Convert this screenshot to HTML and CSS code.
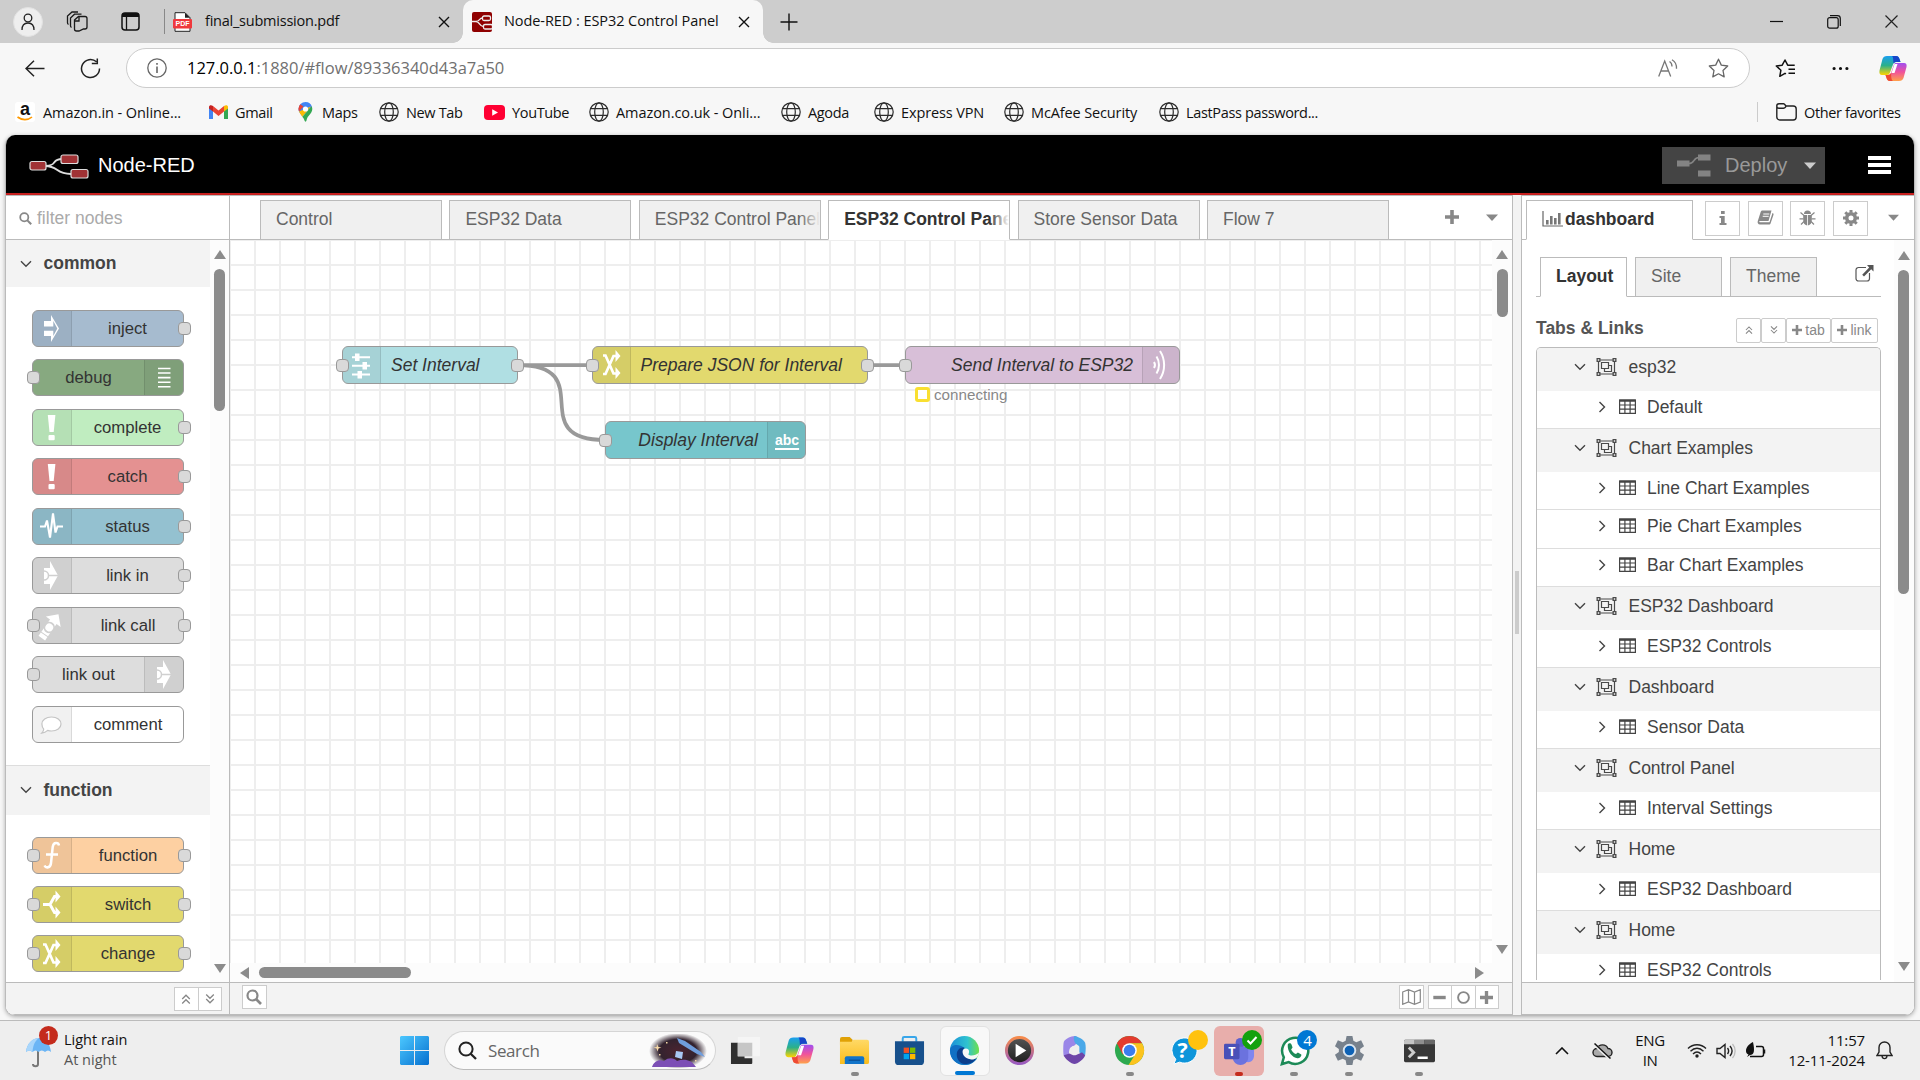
FILE: index.html
```html
<!DOCTYPE html>
<html lang="en">
<head>
<meta charset="utf-8">
<title>Node-RED : ESP32 Control Panel</title>
<link rel="stylesheet" href="styles.css">
</head>
<body>
<svg width="0" height="0" class="defs" aria-hidden="true">
  <defs>
    <linearGradient id="cpA" x1="0" y1="0" x2="0" y2="1"><stop offset="0" stop-color="#1b9ff0"/><stop offset=".5" stop-color="#2bb08a"/><stop offset="1" stop-color="#ffd500"/></linearGradient>
    <linearGradient id="cpB" x1="0" y1="0" x2="0" y2="1"><stop offset="0" stop-color="#a04ef0"/><stop offset=".5" stop-color="#f0529c"/><stop offset="1" stop-color="#ffa14a"/></linearGradient>
    <linearGradient id="edgeG" x1="0" y1="0" x2="1" y2="0"><stop offset="0" stop-color="#1a8fd8"/><stop offset=".6" stop-color="#2fc3d0"/><stop offset="1" stop-color="#6fe04a"/></linearGradient>
    <linearGradient id="folderG" x1="0" y1="0" x2="0" y2="1"><stop offset="0" stop-color="#ffd966"/><stop offset="1" stop-color="#fbbc1a"/></linearGradient>
    <linearGradient id="winG" x1="0" y1="0" x2="1" y2="1"><stop offset="0" stop-color="#4cc8ff"/><stop offset="1" stop-color="#0670cf"/></linearGradient>
    <linearGradient id="ringG" x1="0" y1="0" x2="0" y2="1"><stop offset="0" stop-color="#f58a4b"/><stop offset="1" stop-color="#9a5bc0"/></linearGradient>
    <linearGradient id="darkG" x1="0" y1="0" x2="0" y2="1"><stop offset="0" stop-color="#555"/><stop offset="1" stop-color="#1e1e1e"/></linearGradient>
    <radialGradient id="spaceG"><stop offset="0" stop-color="#4a2330"/><stop offset=".65" stop-color="#33232f"/><stop offset="1" stop-color="#fafafa"/></radialGradient>
  </defs>
  <symbol id="globe" viewBox="0 0 20 20"><g fill="none" stroke="#2b2b2b" stroke-width="1.2"><circle cx="10" cy="10" r="9.2"/><ellipse cx="10" cy="10" rx="4.3" ry="9.2"/><path d="M1.6 6.6h16.8M1.6 13.4h16.8"/></g></symbol>
  <symbol id="close" viewBox="0 0 12 12"><path d="M1 1l10 10M11 1L1 11" stroke="#111" stroke-width="1.4" fill="none"/></symbol>
  <symbol id="copilot" viewBox="0 0 28 27"><path d="M8 1h9c2.400 0 3 1.500 3.500 3l1 3h-4c-2 0-3 1-3.500 2.500L11 17.500c-.6 1.700-1.500 2.500-3 2.500H3C.8 20 0 18 .5 15.500L3.500 4C4.200 2 5.600 1 8 1z" fill="url(#cpA)"/><path d="M13 1h4c2.400 0 3 1.500 3.500 3l1 3h-4c-1.400 0-2.500.6-3 1.500C14 5 14.500 2 13 1z" fill="#1746c8"/><path d="M20 26h-9c-2.400 0-3-1.500-3.500-3l-1-3H9c1.500 0 2.600-1 3.200-2.500L15 9.500C15.600 7.800 16.500 8 18 8h7c2.200 0 3 1.500 2.500 4l-3 11c-.7 2-2.100 3-4.500 3z" fill="url(#cpB)"/><path d="M14 26h-3c-2.400 0-3-1.500-3.500-3l-1-3H9c1.500 0 2.600-1 3-2 .5 2-.5 6 2 8z" fill="#ee4a34"/><path d="M15.500 9h3l-3 9h-3z" fill="#fff"/></symbol>
  <symbol id="up2" viewBox="0 0 10 12"><path d="M1.200 6L5 2.200 8.800 6M1.200 10.500L5 6.700l3.800 3.800" fill="none" stroke="currentColor" stroke-width="1.300"/></symbol>
  <symbol id="down2" viewBox="0 0 10 12"><path d="M1.200 1.500L5 5.300l3.800-3.800M1.200 6L5 9.800 8.800 6" fill="none" stroke="currentColor" stroke-width="1.300"/></symbol>
  <symbol id="plus" viewBox="0 0 14 14"><path d="M5.200 0h3.600v5.200H14v3.600H8.800V14H5.200V8.800H0V5.200h5.200z" fill="currentColor"/></symbol>
  <symbol id="caret" viewBox="0 0 12 7"><path d="M0 .5h12L6 7z" fill="currentColor"/></symbol>
  <symbol id="chevd" viewBox="0 0 12 8"><path d="M1 1.200l5 5 5-5" fill="none" stroke="#444" stroke-width="1.400"/></symbol>
  <symbol id="chevr" viewBox="0 0 8 12"><path d="M1.500 1l5 5-5 5" fill="none" stroke="#444" stroke-width="1.400"/></symbol>
  <symbol id="grp" viewBox="0 0 20 18"><g fill="none" stroke="#4a4a4a" stroke-width="1.200"><path d="M2 2h16v14H2z"/><path d="M5 4.500h7v6H5z"/><path d="M12.500 7.500H15v6H8v-3"/></g><path d="M0 0h4v4H0zM16 0h4v4h-4zM0 14h4v4H0zM16 14h4v4h-4z" fill="#4a4a4a"/><path d="M1.300 1.300h1.400v1.400H1.300zM17.300 1.300h1.400v1.400h-1.400zM1.300 15.300h1.400v1.400H1.300zM17.300 15.300h1.400v1.400h-1.400z" fill="#f3f3f3"/></symbol>
  <symbol id="tbl" viewBox="0 0 17 15"><path d="M.6 1h15.800v13.400H.6zM.6 6h15.800M.6 10.200h15.800M5.900 2v12M11.100 2v12" fill="none" stroke="#444" stroke-width="1.200"/><path d="M.3.5h16.400v2.300H.3z" fill="#444"/></symbol>
  <symbol id="mag" viewBox="0 0 16 16"><circle cx="6.500" cy="6.500" r="5" fill="none" stroke="currentColor" stroke-width="2.200"/><path d="M10 10l5 5" stroke="currentColor" stroke-width="2.600"/></symbol>
  <symbol id="n-inject" viewBox="0 0 39 37"><path d="M12 11h7V5l8 13.500L19 32v-6h-7v-5.200h9.300V26l4-7.500-4-7.500v5.500H12z" fill="#fff"/></symbol>
  <symbol id="n-debug" viewBox="0 0 39 37"><path d="M13 9.500h12.500M13 14h12.500M13 18.600h12.500M13 23.200h12.500M13 27.800h12.500" stroke="#fff" stroke-width="1.600"/></symbol>
  <symbol id="n-bang" viewBox="0 0 39 37"><path d="M15.800 6h7.600l-1.700 17h-4.200z" fill="#fff"/><rect x="16.500" y="26" width="6.200" height="5.300" rx="1" fill="#fff"/></symbol>
  <symbol id="n-status" viewBox="0 0 39 37"><path d="M8 18.500h5l2-6 3 17 3-24 2.500 19 2-6h5.500" fill="none" stroke="#fff" stroke-width="2.100"/></symbol>
  <symbol id="n-link" viewBox="0 0 39 37"><path d="M12 11h6V4l8 14.500L18 33v-6h-6z" fill="#fff"/><path d="M12 14a4.500 4.500 0 0 1 0 9M16.500 18.500H27" fill="none" stroke="#d0d0d0" stroke-width="1.500"/></symbol>
  <symbol id="n-call" viewBox="0 0 39 37"><g transform="rotate(-55 19 18)"><path d="M3 14h4v8H3zM8 14h15V9l9 9-9 9v-5H8z" fill="#fff"/><circle cx="16" cy="18" r="4.800" fill="#fff" stroke="#d0d0d0" stroke-width="1.800"/></g></symbol>
  <symbol id="n-comment" viewBox="0 0 39 37"><path d="M19.500 11c5.500 0 9.500 3 9.500 7s-4 7-9.500 7c-1.500 0-2.700-.2-3.800-.6-1.700 1.600-3.500 2.500-6 2.800 1.300-1.300 2-2.600 2-4-1-1.300-1.800-2.900-1.800-5.200 0-4 4.100-7 9.600-7z" fill="#fff" stroke="#c4c4c4" stroke-width="1.200"/></symbol>
  <symbol id="n-fn" viewBox="0 0 39 37"><path d="M27 8.500c-.5-3-5.500-4-6.300 1.500L19 26c-.5 5-5 5.500-6.500 2.500M14 17.500h12" fill="none" stroke="#fff" stroke-width="2.500"/></symbol>
  <symbol id="n-switch" viewBox="0 0 39 37"><path d="M11 18.500h7l4.500-8H25M18 18.500l4.500 8H25" fill="none" stroke="#fff" stroke-width="2.900"/><path d="M23.500 4.500l5 6-5 6zM23.500 20.500l5 6-5 6z" fill="#fff"/></symbol>
  <symbol id="n-change" viewBox="0 0 39 37"><path d="M11 9.500h2.500l8 18H25M11 28h2.500l8-18H25" fill="none" stroke="#fff" stroke-width="2.700"/><path d="M23.500 4l5 6-5 6zM23.500 21l5 6-5 6z" fill="#fff"/></symbol>
  <symbol id="n-sliders" viewBox="0 0 39 37"><path d="M10 11.300h18M10 19.800h18M10 28.600h18" stroke="#fff" stroke-width="2"/><path d="M13 7.500h4.500v7.500H13zM20.500 16h4.500v7.500h-4.500zM15.500 25H20v7.500h-4.500z" fill="#fff"/></symbol>
  <symbol id="n-wave" viewBox="0 0 39 37"><path d="M12 16c1.300 2 1.300 4 0 6M14.500 10.500c3.300 5 3.300 12 0 17M18 5c5.500 8.500 5.500 19.500 0 28" fill="none" stroke="#fff" stroke-width="2"/></symbol>
</svg>

<header class="titlebar">
  <span class="avatar"><svg width="14" height="18" viewBox="0 0 14 18"><g fill="none" stroke="#222" stroke-width="1.300"><circle cx="7" cy="5" r="3.800"/><path d="M1 17c0-5 2.500-7 6-7s6 2 6 7"/></g></svg></span>
  <svg class="ws" width="22" height="21" viewBox="0 0 22 21"><g fill="none" stroke="#1a1a1a" stroke-width="1.300"><path d="M8.500 9l4-3.500h6.500a2 2 0 0 1 2 2V16a2 2 0 0 1-2 2h-1.500L13 20H10.500a2 2 0 0 1-2-2z"/><path d="M13 6v4H9M5.500 16.500a2 2 0 0 1-1-1.700V7l4-3.800h7M2.500 13.500a2 2 0 0 1-1-1.700V5L6 1h6"/></g></svg>
  <svg class="vt" width="19" height="19" viewBox="0 0 19 19"><rect x="1" y="1" width="17" height="17" rx="3" fill="none" stroke="#111" stroke-width="1.500"/><path d="M1 5V3a2 2 0 0 1 2-2h13a2 2 0 0 1 2 2v2z" fill="#111"/><path d="M5.500 5v13" stroke="#111" stroke-width="1.300"/></svg>
  <span class="tsep"></span>
  <div class="btab">
    <svg width="19" height="20" viewBox="0 0 19 20"><path d="M2 .7h10l5 5V19.300H2z" fill="#fff" stroke="#222"/><path d="M12 .7v5h5z" fill="#222"/><rect y="7" width="19" height="9.500" rx="1" fill="#f0383c"/><text x="9.500" y="14.400" text-anchor="middle" class="pdf">PDF</text></svg>
    <span>final_submission.pdf</span><svg class="x" width="12" height="12"><use href="#close"/></svg>
  </div>
  <div class="btab active">
    <svg width="20" height="20" viewBox="0 0 20 20"><rect width="20" height="20" rx="2" fill="#8f0000"/><g fill="none" stroke="#eee" stroke-width="1.300"><rect x="10.500" y="4" width="8" height="4.500" rx="1.500"/><rect x="11.500" y="12.500" width="9" height="4.500" rx="1.500"/><path d="M0 9.500h4c4 0 3-3.500 6.500-3.500M4 9.500c4 0 3 5 7.500 5"/></g></svg>
    <span>Node-RED : ESP32 Control Panel</span><svg class="x" width="12" height="12"><use href="#close"/></svg>
  </div>
  <svg class="newtab" width="18" height="18" viewBox="0 0 18 18"><path d="M9 .5v17M.5 9h17" stroke="#111" stroke-width="1.400"/></svg>
  <div class="winbtns">
    <svg width="13" height="13" viewBox="0 0 13 13"><path d="M0 6.500h13" stroke="#111" stroke-width="1.200"/></svg>
    <svg width="14" height="14" viewBox="0 0 14 14"><g fill="none" stroke="#111" stroke-width="1.200"><rect x=".7" y="2.700" width="10.500" height="10.500" rx="2"/><path d="M3 .7h7.500a2.800 2.800 0 0 1 2.800 2.800V11"/></g></svg>
    <svg width="13" height="13" viewBox="0 0 13 13"><path d="M.5.5l12 12M12.500.5l-12 12" stroke="#222" stroke-width="1.200"/></svg>
  </div>
</header>

<div class="navbar">
  <svg width="20" height="17" viewBox="0 0 20 17"><path d="M19.500 8.500H1M9 .8L1 8.500l8 7.700" fill="none" stroke="#222" stroke-width="1.500"/></svg>
  <svg width="21" height="21" viewBox="0 0 21 21"><path d="M19.500 10.500a9 9 0 1 1-3-6.700M17.300.5v5h-5.500" fill="none" stroke="#222" stroke-width="1.500"/></svg>
  <div class="address">
    <svg width="20" height="20" viewBox="0 0 20 20"><circle cx="10" cy="10" r="9.200" fill="none" stroke="#666" stroke-width="1.300"/><path d="M10 8.500v6.500M10 5v1.700" stroke="#666" stroke-width="1.600"/></svg>
    <span class="url"><b>127.0.0.1</b>:1880/#flow/89336340d43a7a50</span>
    <svg width="20" height="18" viewBox="0 0 20 18"><path d="M.7 17.500L6.700 2l6 15.500M3 12h7.500M11.500 2.500c2 1.300 2.500 3 2.500 5M14 .7c3.500 2 4.700 4.700 4.500 9" fill="none" stroke="#777" stroke-width="1.300"/></svg>
    <svg width="21" height="20" viewBox="0 0 21 20"><path d="M10.500 1.200l2.800 5.900 6.400.9-4.700 4.500 1.200 6.400-5.700-3.100-5.700 3.100L6 12.500 1.300 8l6.400-.9z" fill="none" stroke="#666" stroke-width="1.300" stroke-linejoin="round"/></svg>
  </div>
  <svg width="21" height="19" viewBox="0 0 21 19"><path d="M11 14.800l-1-.5-5.200 3 1.100-6.100L1.300 7 7.200 6.200 10 1l2.700 5.200h7M13.500 10.300h6.500M13.500 14.300h6.500" fill="none" stroke="#111" stroke-width="1.500" stroke-linejoin="round"/></svg>
  <svg width="17" height="5" viewBox="0 0 17 5"><path d="M.5 2.500a1.600 1.600 0 1 0 3.200 0 1.600 1.600 0 1 0-3.200 0M6.900 2.500a1.600 1.600 0 1 0 3.200 0 1.600 1.600 0 1 0-3.200 0M13.300 2.500a1.600 1.600 0 1 0 3.200 0 1.600 1.600 0 1 0-3.200 0" fill="#111"/></svg>
  <svg width="28" height="27"><use href="#copilot"/></svg>
</div>

<nav class="bookmarks">
  <a class="wide"><span class="amz">a<svg width="16" height="5" viewBox="0 0 16 5"><path d="M.5 1c4.500 3.500 10.500 3.500 14.500 0" fill="none" stroke="#f90" stroke-width="1.600"/></svg></span>Amazon.in - Online...</a>
  <a><svg width="19" height="14" viewBox="0 0 19 14"><path d="M0 2v12h4V5z" fill="#4285f4"/><path d="M19 2v12h-4V5z" fill="#34a853"/><path d="M4 1l5.500 4.500L15 1v5.500L9.500 11 4 6.500z" fill="#ea4335"/><path d="M0 2c0-2 2.300-2.500 4-1v5.500L0 3.500z" fill="#c5221f"/><path d="M19 2c0-2-2.300-2.500-4-1v5.500l4-3z" fill="#fbbc04"/></svg>Gmail</a>
  <a><svg width="15" height="20" viewBox="0 0 15 20"><path d="M7.500 0A7 7 0 0 1 14 5L4 14C2 11 .5 9.500.5 7A7 7 0 0 1 7.500 0z" fill="#4285f4"/><path d="M2.300 2.300A7 7 0 0 0 1 9.500l4.500-5z" fill="#ea4335"/><path d="M1 9.500c.8 2 2 3 3.300 5.200L13 4.500z" fill="#fbbc04"/><path d="M13.700 4.300c1.700 4-.5 6.700-2.700 9.200-1.800 2-2 3-2.500 5-.3 1.500-1.700 1.500-2 0-.5-1.500-1-2.500-2.200-3.800z" fill="#34a853"/><circle cx="7.500" cy="7" r="2.600" fill="#fff"/></svg>Maps</a>
  <a><svg width="20" height="20"><use href="#globe"/></svg>New Tab</a>
  <a><svg width="21" height="15" viewBox="0 0 21 15"><rect width="21" height="15" rx="4" fill="#f03"/><path d="M8.200 4.200l5.800 3.300-5.800 3.300z" fill="#fff"/></svg>YouTube</a>
  <a class="wide"><svg width="20" height="20"><use href="#globe"/></svg>Amazon.co.uk - Onli...</a>
  <a><svg width="20" height="20"><use href="#globe"/></svg>Agoda</a>
  <a class="mid"><svg width="20" height="20"><use href="#globe"/></svg>Express VPN</a>
  <a class="mid"><svg width="20" height="20"><use href="#globe"/></svg>McAfee Security</a>
  <a><svg width="20" height="20"><use href="#globe"/></svg>LastPass password...</a>
  <a class="other"><svg width="21" height="18" viewBox="0 0 21 18"><path d="M.8 4V14a3 3 0 0 0 3 3h13.400a3 3 0 0 0 3-3V6a3 3 0 0 0-3-3H10L8.500 1.200C8.200.9 7.800.8 7.500.8H3a2.200 2.200 0 0 0 0 4.500h4.500c1 0 1.600-.5 2-1.100L10 3" fill="none" stroke="#222" stroke-width="1.400"/></svg>Other favorites</a>
</nav>

<main class="app">
  <header class="nr-header">
    <svg width="60" height="25" viewBox="0 0 60 25"><path d="M16 12c13 0 6-7 17-7M16 12c14 0 10 8 26 8" fill="none" stroke="#ddd" stroke-width="2"/><g fill="#a03235" stroke="#ddd" stroke-width="1.200"><rect x="1" y="7.500" width="16" height="8.500" rx="2"/><rect x="32" y="1" width="17" height="8.500" rx="2"/><rect x="42" y="15.500" width="17" height="8.500" rx="2"/></g></svg>
    <span class="brand">Node-RED</span>
    <div class="deploy"><svg width="34" height="23" viewBox="0 0 34 23"><g fill="#838383"><path d="M0 6.500h12.500v6H0zM21 .5h12.500v6H21zM21 16.500h12.500v6H21z"/></g><path d="M12 9.500c6 0 4-6 10-6" fill="none" stroke="#838383" stroke-width="1.500"/></svg><span>Deploy</span><svg class="dc" width="12" height="7"><use href="#caret"/></svg></div>
    <span class="burger"><i></i><i></i><i></i></span>
  </header>
  <div class="body">
    <aside class="palette">
      <div class="filter"><svg width="13" height="13"><use href="#mag"/></svg>filter nodes</div>
      <div class="pscroll">
        <div class="plist">
          <div class="cat"><svg width="12" height="8"><use href="#chevd"/></svg>common</div>
          <div class="pnodes">
            <div class="pnode inject"><span class="ic"><svg><use href="#n-inject"/></svg></span><span class="lb">inject</span><i class="port r"></i></div>
            <div class="pnode debug"><i class="port l"></i><span class="lb">debug</span><span class="ic end"><svg><use href="#n-debug"/></svg></span></div>
            <div class="pnode complete"><span class="ic"><svg><use href="#n-bang"/></svg></span><span class="lb">complete</span><i class="port r"></i></div>
            <div class="pnode catch"><span class="ic"><svg><use href="#n-bang"/></svg></span><span class="lb">catch</span><i class="port r"></i></div>
            <div class="pnode status"><span class="ic"><svg><use href="#n-status"/></svg></span><span class="lb">status</span><i class="port r"></i></div>
            <div class="pnode link"><span class="ic"><svg><use href="#n-link"/></svg></span><span class="lb">link in</span><i class="port r"></i></div>
            <div class="pnode link"><i class="port l"></i><span class="ic"><svg><use href="#n-call"/></svg></span><span class="lb">link call</span><i class="port r"></i></div>
            <div class="pnode link"><i class="port l"></i><span class="lb">link out</span><span class="ic end"><svg><use href="#n-link"/></svg></span></div>
            <div class="pnode comment"><span class="ic"><svg><use href="#n-comment"/></svg></span><span class="lb">comment</span></div>
          </div>
          <div class="cat second"><svg width="12" height="8"><use href="#chevd"/></svg>function</div>
          <div class="pnodes last">
            <div class="pnode func"><i class="port l"></i><span class="ic"><svg><use href="#n-fn"/></svg></span><span class="lb">function</span><i class="port r"></i></div>
            <div class="pnode yellow"><i class="port l"></i><span class="ic"><svg><use href="#n-switch"/></svg></span><span class="lb">switch</span><i class="port r"></i></div>
            <div class="pnode yellow"><i class="port l"></i><span class="ic"><svg><use href="#n-change"/></svg></span><span class="lb">change</span><i class="port r"></i></div>
          </div>
        </div>
        <div class="vbar p"><i class="up"></i><b></b><i class="dn"></i></div>
      </div>
      <div class="foot pf"><span class="fb"><svg width="10" height="12"><use href="#up2"/></svg></span><span class="fb"><svg width="10" height="12"><use href="#down2"/></svg></span></div>
    </aside>

    <section class="workspace">
      <div class="wtabs">
        <div class="wtab">Control</div><div class="wtab">ESP32 Data</div><div class="wtab">ESP32 Control Panel</div><div class="wtab on">ESP32 Control Panel</div><div class="wtab">Store Sensor Data</div><div class="wtab">Flow 7</div>
        <svg class="add" width="14" height="14"><use href="#plus"/></svg><svg width="12" height="7"><use href="#caret"/></svg>
      </div>
      <div class="wmain">
        <div class="canvas">
          <svg class="wires" width="1263" height="723" viewBox="230 240 1263 723"><path d="M518 365h74M868 365h37M518 365C600 365 523 440 605 440" fill="none" stroke="#999" stroke-width="3.750"/></svg>
          <div class="node n1"><i class="port l"></i><span class="ic"><svg><use href="#n-sliders"/></svg></span><span class="lb">Set Interval</span><i class="port r"></i></div>
          <div class="node n2"><i class="port l"></i><span class="ic"><svg><use href="#n-change"/></svg></span><span class="lb">Prepare JSON for Interval</span><i class="port r"></i></div>
          <div class="node n3"><i class="port l"></i><span class="lb">Send Interval to ESP32</span><span class="ic end"><svg><use href="#n-wave"/></svg></span></div>
          <div class="node n4"><i class="port l"></i><span class="lb">Display Interval</span><span class="ic end abc">abc</span></div>
          <div class="nstatus"><i></i>connecting</div>
        </div>
        <div class="vbar w"><i class="up"></i><b></b><i class="dn"></i></div>
      </div>
      <div class="hbar"><i class="lf"></i><b></b><i class="rt"></i></div>
      <div class="foot wf">
        <span class="fb"><svg width="16" height="16"><use href="#mag"/></svg></span>
        <span class="fb map"><svg width="19" height="16" viewBox="0 0 19 16"><path d="M.7 3l5.800-2.300 6 2.300 5.800-2.300v12.300L12.500 15.300l-6-2.300-5.800 2.300zM6.500.7V13M12.500 3v12.300" fill="none" stroke="#888" stroke-width="1.200"/></svg></span>
        <span class="fb g"><svg width="13" height="13" viewBox="0 0 13 13"><path d="M.3 4.800h12.400v3.400H.3z" fill="#888"/></svg></span><span class="fb"><svg width="13" height="13" viewBox="0 0 13 13"><circle cx="6.500" cy="6.500" r="5.400" fill="none" stroke="#888" stroke-width="1.900"/></svg></span><span class="fb"><svg width="13" height="13"><use href="#plus"/></svg></span>
      </div>
    </section>
    <div class="sep"><i></i></div>

    <aside class="sidebar">
      <div class="stabs">
        <div class="stab"><svg width="21" height="16" viewBox="0 0 21 16"><path d="M1 0v15h20" fill="none" stroke="#666" stroke-width="1.200"/><path d="M4 9h2.600v4.500H4zM8 5h2.600v8.500H8zM12 7h2.600v6.500H12zM16 2h2.600v11.500H16z" fill="#777"/></svg>dashboard</div>
        <span class="sb"><svg width="8" height="14" viewBox="0 0 8 14"><path d="M2 0h3.700v3H2zM.5 5h5.200v7H7.500v2H.5v-2H2V7H.5z" fill="#888"/></svg></span>
        <span class="sb"><svg width="17" height="15" viewBox="0 0 17 15"><path d="M5.500.5h9L11.500 11H3c-1 0-1.200 1.300 0 1.300h9.500L15.500 3c1 .4 1.200 1 1 1.700L13.700 13c-.3 1-.8 1.500-1.700 1.500H3C1 14.500.2 12.500.8 11L3.500 2.500C4 1 4.500.5 5.500.5z" fill="#888"/><path d="M6.300 4h6M5.700 6.300h6" stroke="#fff"/></svg></span>
        <span class="sb"><svg width="17" height="16" viewBox="0 0 17 16"><path d="M5 4a3.500 3.500 0 0 1 7 0zM4.200 5h3.900v10.500C5.500 15 4.200 13 4.200 10zM8.900 5h3.900v5c0 3-1.300 5-3.900 5.500z" fill="#888"/><path d="M1.500 2.500l3.500 3M15.500 2.500l-3.500 3M.5 8.800h4M12.500 8.800h4M2 14.500l3-3M15 14.500l-3-3" stroke="#888" stroke-width="1.200"/></svg></span>
        <span class="sb"><svg width="16" height="16" viewBox="0 0 16 16"><circle cx="8" cy="8" r="4.300" fill="none" stroke="#888" stroke-width="3.600"/><path d="M8 0v2.500M8 13.500V16M0 8h2.500M13.500 8H16M2.300 2.300l2 2M11.700 11.700l2 2M2.300 13.700l2-2M11.700 4.300l2-2" stroke="#888" stroke-width="3"/></svg></span>
        <svg class="sc" width="11" height="7"><use href="#caret"/></svg>
      </div>
      <div class="smain">
        <div class="scol">
          <div class="itabs"><div class="itab on">Layout</div><div class="itab">Site</div><div class="itab">Theme</div><svg width="19" height="17" viewBox="0 0 19 17"><path d="M11 2.500H3.500a2.500 2.500 0 0 0-2.500 2.500v8.500A2.500 2.500 0 0 0 3.500 16H12a2.500 2.500 0 0 0 2.500-2.500V8" fill="none" stroke="#555" stroke-width="1.200"/><path d="M12 0h6.500v6.500l-2.300-2.200L9 11.500 7.200 9.700l7-7.200z" fill="#555"/></svg></div>
          <div class="tl"><strong>Tabs &amp; Links</strong><span class="tb"><svg width="8" height="10"><use href="#up2"/></svg></span><span class="tb"><svg width="8" height="10"><use href="#down2"/></svg></span><span class="tb t"><svg width="10" height="10"><use href="#plus"/></svg>tab</span><span class="tb k"><svg width="10" height="10"><use href="#plus"/></svg>link</span></div>
          <div class="tree">
            <div class="g"><svg class="c"><use href="#chevd"/></svg><svg class="gi"><use href="#grp"/></svg>esp32</div>
            <div class="i"><svg class="c"><use href="#chevr"/></svg><svg class="ti"><use href="#tbl"/></svg>Default</div>
            <div class="g"><svg class="c"><use href="#chevd"/></svg><svg class="gi"><use href="#grp"/></svg>Chart Examples</div>
            <div class="i"><svg class="c"><use href="#chevr"/></svg><svg class="ti"><use href="#tbl"/></svg>Line Chart Examples</div>
            <div class="i"><svg class="c"><use href="#chevr"/></svg><svg class="ti"><use href="#tbl"/></svg>Pie Chart Examples</div>
            <div class="i"><svg class="c"><use href="#chevr"/></svg><svg class="ti"><use href="#tbl"/></svg>Bar Chart Examples</div>
            <div class="g"><svg class="c"><use href="#chevd"/></svg><svg class="gi"><use href="#grp"/></svg>ESP32 Dashboard</div>
            <div class="i"><svg class="c"><use href="#chevr"/></svg><svg class="ti"><use href="#tbl"/></svg>ESP32 Controls</div>
            <div class="g"><svg class="c"><use href="#chevd"/></svg><svg class="gi"><use href="#grp"/></svg>Dashboard</div>
            <div class="i"><svg class="c"><use href="#chevr"/></svg><svg class="ti"><use href="#tbl"/></svg>Sensor Data</div>
            <div class="g"><svg class="c"><use href="#chevd"/></svg><svg class="gi"><use href="#grp"/></svg>Control Panel</div>
            <div class="i"><svg class="c"><use href="#chevr"/></svg><svg class="ti"><use href="#tbl"/></svg>Interval Settings</div>
            <div class="g"><svg class="c"><use href="#chevd"/></svg><svg class="gi"><use href="#grp"/></svg>Home</div>
            <div class="i"><svg class="c"><use href="#chevr"/></svg><svg class="ti"><use href="#tbl"/></svg>ESP32 Dashboard</div>
            <div class="g"><svg class="c"><use href="#chevd"/></svg><svg class="gi"><use href="#grp"/></svg>Home</div>
            <div class="i"><svg class="c"><use href="#chevr"/></svg><svg class="ti"><use href="#tbl"/></svg>ESP32 Controls</div>
          </div>
        </div>
        <div class="vbar s"><i class="up"></i><b></b><i class="dn"></i></div>
      </div>
      <div class="foot"></div>
    </aside>
  </div>
</main>

<footer class="taskbar">
  <div class="weather"><span class="umb"><svg width="27" height="36" viewBox="0 0 27 36"><path d="M12 17v15c0 3-5 3-5 0" fill="none" stroke="#777" stroke-width="2"/><path d="M0 20C1 11 7 6 13 6s11 5 12 14c-2-2-4-2-6 0-2-2-4.500-2-6.500 0-2-2-4-2-6 0C4.500 18 2 18 0 20z" fill="#6bb5f5"/><path d="M6.500 20C7 12 10 8 13 6c-6 0-12 5-13 14 2-2 4.500-2 6.500 0z" fill="#a9d6fb"/></svg><b>1</b></span><div><p>Light rain</p><p class="dim">At night</p></div></div>
  <svg class="start" width="29" height="29" viewBox="0 0 29 29"><path d="M1 0h13v14H0V1zM15 0h13l1 1v13H15zM0 15h14v14H1l-1-1zM15 15h14v13l-1 1H15z" fill="url(#winG)"/></svg>
  <div class="search"><svg width="19" height="19" viewBox="0 0 19 19"><circle cx="8" cy="8" r="6.600" fill="none" stroke="#222" stroke-width="2"/><path d="M12.700 12.700l5.300 5.300" stroke="#222" stroke-width="2.300"/></svg><span>Search</span>
    <svg width="58" height="34" viewBox="0 0 58 34"><ellipse cx="29" cy="17" rx="29" ry="18" fill="url(#spaceG)"/><path d="M3 33c2-6 7-8 12-6 5-4 10-3 13 0 7-3 15-1 19 6z" fill="#7c4fb5"/><path d="M28 4l8 3 16 11 4 5-8-3-18-11z" fill="#6f9ddc"/><path d="M27 17l7 1-1 7-7-2z" fill="#a9c8f5"/><path d="M8 10l1.500 3 3 .5-3 1-1 3-1-3-3-1 3-.5zM17 8h1.500v1.500H17zM46 26h1.500v1.500H46zM10 20h1.500v1.500H10z" fill="#f6d9a8"/></svg></div>
  <div class="apps">
    <span><svg viewBox="0 0 32 32"><path d="M1 8h14v16H23v5a1 1 0 0 1-1 1H1z" fill="#2f2f2f"/><rect x="8" y="2" width="23" height="20" fill="#f4f4f4" opacity=".95"/><path d="M8 8h15v14H8z" fill="#c6c6c6"/></svg></span>
    <span><svg viewBox="-1 -1 30 29"><use href="#copilot" width="28" height="27"/></svg></span>
    <span><svg viewBox="0 0 32 32"><path d="M1 4a2 2 0 0 1 2-2h8l3 3v5H1z" fill="#e0a106"/><path d="M1 7h12l2-2h14a2 2 0 0 1 2 2v21a2 2 0 0 1-2 2H1z" fill="url(#folderG)"/><path d="M6 30v-6a2 2 0 0 1 2-2h16a2 2 0 0 1 2 2v6z" fill="#1274c9"/><path d="M10 26h12" stroke="#0a4f94" stroke-width="1.300"/></svg><i></i></span>
    <span><svg viewBox="0 0 32 32"><path d="M9 7V3.500A1.500 1.500 0 0 1 10.500 2h11A1.500 1.500 0 0 1 23 3.500V7" fill="none" stroke="#38a6ea" stroke-width="2"/><path d="M1 6.500h30V27a4 4 0 0 1-4 4H5a4 4 0 0 1-4-4z" fill="#17508c"/><path d="M10 13h5.500v5.500H10z" fill="#f25022"/><path d="M16.500 13H22v5.500h-5.500z" fill="#7fba00"/><path d="M10 19.500h5.500V25H10z" fill="#00a4ef"/><path d="M16.500 19.500H22V25h-5.500z" fill="#ffb900"/></svg></span>
    <span class="tile cur"><svg viewBox="0 0 32 32"><circle cx="16" cy="16" r="15" fill="url(#edgeG)"/><path d="M1 16C1 11 7 9 12 11c5 2 5 5 3 7-1 5 4 8 9 7 2 0 4-1 5-1-3 5-8 7-13 7C8 31 1 25 1 16z" fill="#1170c4"/><path d="M8 20c0-5 4-8 8-7-3 3-2 11 7 12 2 0 4 0 5-1-3 5-7 6-12 6-5-1-8-5-8-10z" fill="#0c3f8c"/><path d="M14 17c0-3 4-4 6-2 1 1 1 3 0 5 2 2 8 1 11-2-1 6-5 8-9 7-5-1-8-4-8-8z" fill="#f7f7f7"/></svg><i class="run"></i></span>
    <span><svg viewBox="0 0 32 32"><circle cx="16" cy="16" r="13.500" fill="url(#darkG)" stroke="url(#ringG)" stroke-width="3"/><path d="M12 9l11 7-11 7z" fill="#fff"/></svg></span>
    <span><svg viewBox="0 0 32 32"><path d="M16 1c-3 0-10 3-11 6-.8 3-.8 12 0 15l6 3c-1-6-1-10 1-12 3-2 6-2 6-6V1z" fill="#9a86e8"/><path d="M16 1c3 0 10 4 11 7 .8 3 .8 7 0 13l-6-3V12c-1-2-4-2-5-5-1-3-1-5 0-6z" fill="#4aa8e8"/><path d="M5 21l6-2c2 1 3 2 5 2s6-3 8-3l3 3c-1 4-8 9-11 9S6 25 5 21z" fill="#6d45a8"/><circle cx="16" cy="15.500" r="4.500" fill="#eee"/></svg></span>
    <span><svg viewBox="0 0 32 32"><circle cx="16" cy="16" r="15" fill="#2da94f"/><path d="M16 1a15 15 0 0 1 13 7.500H16L9 20 3 8.500A15 15 0 0 1 16 1z" fill="#e33b2e"/><path d="M29 8.500A15 15 0 0 1 15 31l7.500-12L16 8.500z" fill="#fcc31e"/><circle cx="16" cy="16" r="7.500" fill="#fff"/><circle cx="16" cy="16" r="6" fill="#3b7ded"/></svg><i></i></span>
    <span><svg viewBox="0 0 32 32"><path d="M3 16a13 13 0 1 1 8 12l-6 2 2-5a13 13 0 0 1-4-9z" fill="#0e95da" stroke="#fff"/><text x="14" y="24" text-anchor="middle" class="q">?</text></svg><em class="dot y"></em></span>
    <span class="tile alert"><svg viewBox="0 0 32 32"><circle cx="17" cy="8" r="5" fill="#5b60cf"/><path d="M18 13h13v8c0 5-3 7-6 7-4 0-7-3-7-7z" fill="#7f86ef"/><path d="M9 12h16v11c0 5-4 8-8 8s-8-3-8-8z" fill="#6b72de"/><rect x="0" y="9" width="16" height="16" rx="1.500" fill="#4950b8"/><text x="8" y="21.500" text-anchor="middle" class="tt">T</text></svg><em class="dot gr"><svg viewBox="0 0 20 20"><path d="M5.500 10.500l3 3 6-6.500" fill="none" stroke="#fff" stroke-width="2"/></svg></em><i class="red"></i></span>
    <span><svg viewBox="0 0 32 32"><path d="M3 30l2-7A13.500 13.500 0 1 1 10 28z" fill="#fff" stroke="#1c8a57" stroke-width="2.600"/><path d="M9 10c1-2 3-2 4 0l1 3-1.500 2c1.500 3 3 4 5 4.500l2-1.500 3.500 2c.5 2-2 4-4 4C14 23.500 8.500 17 9 10z" fill="#1c8a57"/></svg><em class="dot b">4</em><i></i></span>
    <span><svg viewBox="0 0 32 32"><path d="M13 1h6l1 5 3 1.500 5-2 3 6-4 3v3l4 3-3 6-5-2-3 1.500-1 5h-6l-1-5-3-1.500-5 2-3-6 4-3v-3l-4-3 3-6 5 2L12 6z" fill="#77818c"/><circle cx="16" cy="16" r="6" fill="#0e62b5" stroke="#d9e4ee" stroke-width="2"/></svg><i></i></span>
    <span class="term"><svg viewBox="0 0 32 32"><rect x="0" y="5" width="32" height="23" rx="1.500" fill="#373737"/><path d="M0 6.500A1.500 1.500 0 0 1 1.500 5H11v4.500H0z" fill="#c4c4c4"/><path d="M11 5h10v4.500H11z" fill="#8f8f8f"/><path d="M21 5h9.500A1.500 1.500 0 0 1 32 6.500v3H21z" fill="#686868"/><path d="M5 13l5 5-5 5" fill="none" stroke="#ccc" stroke-width="3"/><path d="M14 23.500h10.500" stroke="#fff" stroke-width="2.600"/></svg><i></i></span>
  </div>
  <div class="tray">
    <svg width="14" height="8" viewBox="0 0 14 8"><path d="M1 7l6-6 6 6" fill="none" stroke="#111" stroke-width="1.600"/></svg>
    <svg class="cl" width="21" height="16" viewBox="0 0 21 16"><path d="M5 13.500a4 4 0 0 1 0-8A6 6 0 0 1 16 5.500a4 4 0 0 1 0 8z" fill="#aaa" stroke="#222" stroke-width="1.400"/><path d="M2 1l16 15" stroke="#eee" stroke-width="3"/><path d="M2.500.5l16 15" stroke="#111" stroke-width="1.500"/></svg>
    <div class="lang"><p>ENG</p><p>IN</p></div>
    <svg class="wi" width="20" height="15" viewBox="0 0 20 15"><path d="M1 5.500c5-5 13-5 18 0M3.500 8.200c4-4 9-4 13 0M6 11c2.500-2.500 5.500-2.500 8 0" fill="none" stroke="#222" stroke-width="1.400"/><circle cx="10" cy="13" r="1.700" fill="#222"/></svg>
    <svg class="sp" width="20" height="16" viewBox="0 0 20 16"><path d="M1 5.500h3L9 1.500v13L4 10.500H1zM11.500 5c1.500 2 1.500 4 0 6M14 3c2.500 3 2.500 7 0 10" fill="none" stroke="#222" stroke-width="1.400"/><path d="M16.500 1c3.500 4 3.500 10 0 14" fill="none" stroke="#bbb" stroke-width="1.300"/></svg>
    <svg class="ba" width="20" height="17" viewBox="0 0 20 17"><path d="M10 4.500h5.500a2 2 0 0 1 2 2v6a2 2 0 0 1-2 2H4M18.500 7.500v4" fill="none" stroke="#111" stroke-width="1.500"/><path d="M7 0C3 2 0 5 0 9c0 2 1 3 2.500 3.500L1 15l3-2c4 0 5-4 3-13z" fill="#111"/></svg>
    <div class="clock"><p>11:57</p><p>12-11-2024</p></div>
    <svg class="bell" width="17" height="19" viewBox="0 0 17 19"><path d="M8.500 1A5.500 5.500 0 0 1 14 6.500V11l2 3.500H1L3 11V6.500A5.500 5.500 0 0 1 8.500 1zM6 15c.5 3.500 4.500 3.500 5 0" fill="none" stroke="#222" stroke-width="1.400"/></svg>
  </div>
</footer>
</body>
</html>
```
FILE: styles.css
```css
* { box-sizing: border-box; }
body { margin: 0; width: 1920px; height: 1080px; overflow: hidden; display: flex; flex-direction: column; background: #f7f7f7; font-family: "Open Sans", "Noto Sans", sans-serif; font-size: 14.5px; letter-spacing: -.2px; color: #111; }
svg { display: block; flex: none; }
.defs { position: absolute; }
i, em { font-style: normal; }
p { margin: 0; }

.titlebar { height: 43px; background: #cdcdcd; display: flex; align-items: center; flex: none; }
.avatar { width: 30px; height: 30px; border-radius: 50%; background: #eee; border: 1px solid #e2e2e2; margin-left: 13px; display: flex; align-items: center; justify-content: center; }
.ws { margin-left: 23px; }
.vt { margin-left: 33px; }
.tsep { width: 1px; height: 25px; background: #888; margin: 0 8px 0 24px; }
.btab { display: flex; align-items: center; width: 290px; height: 43px; }
.btab span { margin-left: 13px; flex: 1; white-space: nowrap; padding-bottom: 2px; letter-spacing: -.23px; }
.btab .x { margin-right: 13px; }
.btab.active { width: 300px; background: #f7f7f7; border-radius: 10px 10px 0 0; padding-left: 9px; position: relative; }
.btab.active::before, .btab.active::after { content: ""; position: absolute; bottom: 0; width: 10px; height: 10px; }
.btab.active::before { left: -10px; background: radial-gradient(circle at 0 0, #cdcdcd 9.500px, #f7f7f7 10px); }
.btab.active::after { right: -10px; background: radial-gradient(circle at 100% 0, #cdcdcd 9.500px, #f7f7f7 10px); }
.btab.active span { margin-left: 12px; letter-spacing: -.07px; }
.pdf { font: bold 7px "Liberation Sans", sans-serif; fill: #fff; letter-spacing: 0; }
.newtab { margin-left: 17px; }
.winbtns { margin-left: auto; display: flex; gap: 44px; margin-right: 22px; }

.navbar { height: 50px; display: flex; align-items: center; flex: none; padding-left: 25px; }
.navbar > svg:nth-child(2) { margin-left: 35px; }
.address { margin-left: 25px; width: 1624px; height: 40px; border: 1px solid #ccc; border-radius: 20px; background: #fff; display: flex; align-items: center; padding: 0 20px; }
.url { margin-left: 20px; flex: 1; font-size: 16.5px; letter-spacing: -.02px; color: #707070; padding-bottom: 2px; }
.url b { font-weight: 400; color: #000; }
.address svg:last-child { margin-left: 30px; }
.navbar > .address + svg { margin-left: 25px; }
.navbar > svg:nth-child(5) { margin-left: 36px; }
.navbar > svg:nth-child(6) { margin-left: 30px; }

.bookmarks { height: 42px; flex: none; padding: 0 0 4px 15px; display: grid; grid-template-columns: 194px 88px 82px 105px 105px 192px 93px 130px 155px 600px 1fr; align-items: center; }
.bookmarks a { display: flex; align-items: center; gap: 7px; white-space: nowrap; letter-spacing: -.35px; }
.bookmarks a.wide { letter-spacing: -.07px; }
.bookmarks a.mid { letter-spacing: -.13px; }
.bookmarks a:nth-child(3) { padding-left: 1px; gap: 9px; }
.amz { width: 20px; height: 20px; background: #fff; border-radius: 3px; font: bold 18px/14px "Liberation Sans", sans-serif; display: flex; flex-direction: column; align-items: center; margin-right: 1px; }
.other { border-left: 1px solid #ccc; padding-left: 18px; height: 20px; margin-left: -2px; }

.app { margin-left: 5px; width: 1910px; height: 881px; flex: none; border-radius: 10px; overflow: hidden; background: #f3f3f3; display: flex; flex-direction: column; box-shadow: 0 1px 4px rgba(0,0,0,.3); font-family: "Liberation Sans", Arial, sans-serif; font-size: 17.500px; letter-spacing: 0; color: #444; border: 1px solid #bbb; border-top: 0; }
.nr-header { height: 60px; flex: none; background: #000; border-bottom: 2px solid #c7201f; display: flex; align-items: center; margin: 0 -1px; }
.nr-header > svg { margin: 4px 0 0 24px; }
.brand { font-size: 20px; color: #fff; margin-left: 9px; padding-top: 3px; flex: 1; }
.deploy { width: 163px; height: 37px; background: #444; color: #999; display: flex; align-items: center; padding-left: 15px; font-size: 20px; margin-top: 2px; }
.deploy span { margin-left: 14px; }
.deploy .dc { color: #ccc; margin-left: 17px; }
.burger { width: 23px; margin: 2px 24px 0 43px; display: grid; gap: 3px; }
.burger i { height: 4px; background: #fff; }
.body { flex: 1; display: flex; min-height: 0; }

.palette { width: 224px; border-right: 1px solid #bbb; background: #fff; display: flex; flex-direction: column; }
.filter { height: 45px; flex: none; border-bottom: 1px solid #bbb; border-top: 1px solid #bbb; display: flex; align-items: center; gap: 5px; padding: 1px 0 0 13px; color: #aaa; }
.filter svg { color: #888; }
.pscroll { flex: 1; display: flex; min-height: 0; overflow: hidden; }
.plist { width: 204px; }
.cat { height: 47px; background: #f3f3f3; font-weight: bold; display: flex; align-items: center; gap: 11.500px; padding-left: 14px; font-size: 17.500px; }
.cat.second { height: 50px; border-top: 1px solid #ddd; }
.pnodes { padding: 23px 0 22px 26px; display: grid; grid-auto-rows: 37px; row-gap: 12.450px; }
.pnodes.last { padding-top: 22px; }
.pnode, .node { border: 1.250px solid #999; border-radius: 6px; display: flex; position: relative; color: #333; }
.pnode { width: 152px; }
.ic { width: 39px; background: rgba(0,0,0,.055); border-right: 1px solid rgba(0,0,0,.1); border-radius: 5px 0 0 5px; flex: none; }
.ic svg { width: 39px; height: 37px; margin: -1px 0 0 -1px; }
.ic.end { border-right: 0; border-left: 1px solid rgba(0,0,0,.1); border-radius: 0 5px 5px 0; }
.pnode .ic.end svg { margin-left: 0; }
.lb { flex: 1; text-align: center; line-height: 36px; white-space: nowrap; font-size: 16.700px; padding-left: 1px; }
.pnode.debug .lb, .pnode .lb:nth-child(2):nth-last-child(2) { padding-left: 0; }
.port { position: absolute; width: 13px; height: 13px; border: 1.250px solid #999; border-radius: 4px; background: #d9d9d9; top: 11px; }
.port.l { left: -6px; }
.port.r { right: -8px; }
.inject { background: #a6bbcf; } .debug { background: #87a980; } .complete { background: #c0edc0; } .catch { background: #e49191; } .status { background: #94c1d0; } .link { background: #ddd; } .comment { background: #fff; } .func { background: #fdd0a2; } .yellow { background: #e2d96e; }

.vbar { background: #fcfcfc; display: flex; flex-direction: column; align-items: center; width: 19px; flex: none; padding: 10px 0 13px; }
.vbar b { width: 11px; border-radius: 6px; background: #8b8b8b; margin-top: 10px; }
.up { border: 6px solid transparent; border-top: 0; border-bottom: 9px solid #8b8b8b; }
.dn { margin-top: auto; border: 6px solid transparent; border-bottom: 0; border-top: 9px solid #8b8b8b; }
.vbar.p b { height: 142px; } .vbar.w b { height: 48px; } .vbar.s b { height: 324px; }
.vbar.p { padding-bottom: 9px; } .vbar.w { padding-bottom: 9px; width: 20px; } .vbar.s { padding: 11px 1px 11px 0; width: 20px; }

.foot { height: 33px; flex: none; border-top: 1px solid #bbb; border-bottom: 1px solid #bbb; background: #f3f3f3; display: flex; align-items: center; }
.fb { width: 24.500px; height: 24px; border: 1px solid #ccc; background: #fff; color: #888; display: flex; align-items: center; justify-content: center; }
.fb + .fb { margin-left: -1px; }
.pf { justify-content: flex-end; padding-right: 7px; }
.wf { padding: 0 13px 3px 12px; }
.wf .map { margin-left: auto; }
.wf .g { margin-left: 4px; }

.workspace { width: 1283px; border-right: 1px solid #bbb; background: #fff; display: flex; flex-direction: column; }
.wtabs { height: 45px; flex: none; border-bottom: 1px solid #bbb; border-top: 1px solid #bbb; padding-left: 30px; display: flex; align-items: center; gap: 7.400px; color: #888; }
.wtab { width: 182px; height: 40px; align-self: flex-end; border: 1px solid #bbb; background: #f0f0f0; color: #666; line-height: 36px; padding-left: 15px; white-space: nowrap; overflow: hidden; margin-bottom: -1px; position: relative; }
.wtab::after { content: ""; position: absolute; right: 0; top: 0; width: 20px; height: 36px; background: linear-gradient(90deg, rgba(240,240,240,0), #f0f0f0); }
.wtab.on { background: #fff; color: #333; font-weight: bold; border-bottom-color: #fff; }
.wtab.on::after { background: linear-gradient(90deg, rgba(255,255,255,0), #fff); }
.wtabs .add { margin: 0 19px 1px 49px; }
.wmain { flex: 1; display: flex; }
.canvas { flex: 1; position: relative; overflow: hidden; background-color: #fff; background-image: linear-gradient(90deg, #eee 2px, transparent 2px), linear-gradient(#eee 2px, transparent 2px); background-size: 25px 25px; background-position: 24px 24px; }
.wires { position: absolute; left: 0; top: 0; }
.node { position: absolute; height: 38px; font-style: italic; }
.node .lb { font-size: 17.500px; line-height: 36px; padding-left: 0; }
.node .port { top: 11.500px; }
.node .port.l { left: -7px; }
.node .port.r { right: -7px; }
.node .ic { width: 37.500px; }
.n1 { left: 112px; top: 106px; width: 176px; background: #b0dfe3; }
.n1 .lb { padding-right: 27px; }
.n2 { left: 362px; top: 106px; width: 276px; background: #e2d96e; }
.n2 .lb { padding-right: 15px; }
.n3 { left: 675px; top: 106px; width: 275px; background: #d8bfd8; }
.n3 .lb { text-align: right; padding-right: 8.500px; }
.n4 { left: 374.500px; top: 181px; width: 201px; background: #77c6cc; }
.n4 .lb { text-align: right; padding-right: 9px; }
.node .abc { color: #fff; font: bold 14px/15px "Liberation Sans", sans-serif; padding: 11px 0 0 7px; text-decoration: underline; text-underline-offset: 3px; text-decoration-thickness: 2px; }
.nstatus { position: absolute; left: 684.500px; top: 147px; display: flex; align-items: center; gap: 4.500px; color: #888; font-size: 15.200px; line-height: 15px; text-shadow: 0 0 2px #fff, 0 0 2px #fff; }
.nstatus i { width: 15px; height: 15px; border: 3.500px solid #f9df31; border-radius: 3px; background: #fff; }
.hbar { height: 19px; flex: none; background: #fcfcfc; display: flex; align-items: center; padding: 0 28px 0 10px; }
.hbar b { width: 152px; height: 11px; border-radius: 6px; background: #8b8b8b; margin-left: 10px; }
.lf { border: 6px solid transparent; border-left: 0; border-right: 9px solid #8b8b8b; }
.rt { margin-left: auto; border: 6px solid transparent; border-right: 0; border-left: 9px solid #8b8b8b; }

.sep { width: 8px; display: flex; align-items: center; justify-content: center; }
.sep i { width: 4px; height: 63px; background: #ccc; margin-bottom: 6px; }

.sidebar { flex: 1; border-left: 1px solid #bbb; background: #fff; display: flex; flex-direction: column; min-width: 0; }
.stabs { height: 45px; flex: none; border-bottom: 1px solid #bbb; border-top: 1px solid #bbb; display: flex; align-items: center; padding-left: 4px; color: #888; }
.stab { width: 167px; height: 40px; align-self: flex-end; margin: 0 12px -1px 0; border: 1px solid #bbb; border-bottom-color: #fff; background: #fff; color: #333; font-weight: bold; display: flex; align-items: center; gap: 2px; padding: 0 0 2px 15px; }
.sb { width: 35px; height: 35px; border: 1px solid #ccc; margin: 2px 7.700px 0 0; display: flex; align-items: center; justify-content: center; padding-bottom: 2px; }
.sc { margin-left: 12px; }
.smain { flex: 1; display: flex; min-height: 0; justify-content: space-between; }
.scol { width: 359px; padding: 17px 0 0 14px; display: flex; flex-direction: column; overflow: hidden; margin-bottom: 2px; }
.itabs { height: 40px; flex: none; border-bottom: 1px solid #bbb; display: flex; gap: 8px; padding-left: 4px; }
.itab { width: 87px; height: 40px; border: 1px solid #bbb; background: #f0f0f0; color: #666; line-height: 37px; padding-left: 15px; }
.itab.on { background: #fff; color: #333; font-weight: bold; border-bottom-color: #fff; }
.itabs svg { margin: 8px 0 0 30px; }
.tl { display: flex; align-items: center; margin: 21px 3px 4px 0; height: 25px; flex: none; }
.tl strong { flex: 1; color: #555; padding-bottom: 5px; }
.tb { width: 25px; height: 25px; border: 1px solid #ccc; border-radius: 2px; display: flex; align-items: center; justify-content: center; gap: 3px; font-size: 14px; color: #888; padding-bottom: 2px; }
.tb.t { width: 45px; } .tb.k { width: 47px; }
.tree { border: 1px solid #bbb; border-radius: 5px 5px 0 0; border-bottom: 0; flex: none; overflow: hidden; }
.g, .tree .i { display: flex; align-items: center; white-space: nowrap; }
.tree .g { height: 43px; background: #f3f3f3; padding: 0 0 4px 37px; }
.tree .i { height: 38px; padding: 0 0 5px 60.500px; border-bottom: 1px solid #ddd; }
.tree .i + .i { height: 38.700px; }
.tree .g .c { width: 12px; height: 8px; }
.tree .i .c { width: 8px; height: 12px; margin-top: 1px; }
.gi { width: 21px; height: 18px; margin: 0 11.500px 0 10px; }
.ti { width: 17px; height: 15px; margin: 0 11.500px 0 13px; }
.tree svg { position: relative; top: -.5px; }

.taskbar { margin-top: 4px; height: 60px; flex: none; background: #eee; border-top: 1px solid #bbb; display: flex; align-items: center; }
.weather { display: flex; align-items: center; padding: 0 0 2px 26px; gap: 11px; width: 400px; line-height: 20px; font-size: 14.500px; letter-spacing: 0; }
.weather .dim { color: #555; }
.umb { position: relative; }
.umb b { position: absolute; left: 13px; top: -6px; width: 19px; height: 19px; border-radius: 50%; background: #c42b1c; color: #fff; font-size: 13px; font-weight: 400; line-height: 19px; text-align: center; }
.search { margin-left: 15px; width: 272px; height: 39px; border: 1px solid #d5d5d5; border-bottom-color: #bbb; border-radius: 20px; background: #fafafa; display: flex; align-items: center; padding: 0 8px 0 13px; }
.search span { flex: 1; margin-left: 11px; font-size: 17px; color: #666; letter-spacing: -.4px; }
.apps { margin-left: 4px; display: flex; }
.apps > span { width: 50px; height: 50px; margin-right: 4.950px; position: relative; display: flex; align-items: center; justify-content: center; border-radius: 6px; }
.apps svg { width: 31px; height: 31px; }
.apps .cur { background: #f8f8f8; border: 1px solid #e2e2e2; }
.apps .alert { background: #e8aeab; }
.apps .term { margin-left: 15px; }
.apps i { position: absolute; bottom: 0; left: 50%; width: 8px; height: 4px; margin-left: -4px; border-radius: 2px; background: #888; }
.apps i.run { width: 20px; margin-left: -10px; background: #0078d4; }
.apps i.red { background: #c42b1c; }
.q { font: bold 22px "Open Sans", sans-serif; fill: #fff; }
.tt { font: bold 13px "Open Sans", sans-serif; fill: #fff; }
.dot { position: absolute; right: 2px; top: 4px; width: 20px; height: 20px; border-radius: 50%; color: #fff; text-align: center; line-height: 20px; }
.dot svg { width: 20px; height: 20px; }
.dot.y { background: #ffc20e; } .dot.gr { background: #13a10e; } .dot.b { background: #0078d4; font-size: 15px; }
.tray { margin-left: auto; display: flex; align-items: center; font-size: 15px; line-height: 20px; padding-right: 27px; }
.tray .cl { margin-left: 23px; }
.lang { width: 40px; text-align: center; margin-left: 17px; padding-bottom: 2px; letter-spacing: -.4px; }
.tray .wi { margin-left: 17px; }
.tray .sp { margin-left: 9px; }
.tray .ba { margin-left: 10px; }
.clock { width: 82px; text-align: right; margin-left: 17px; white-space: nowrap; padding-bottom: 2px; letter-spacing: -.15px; }
.bell { margin-left: 11px; }
```
